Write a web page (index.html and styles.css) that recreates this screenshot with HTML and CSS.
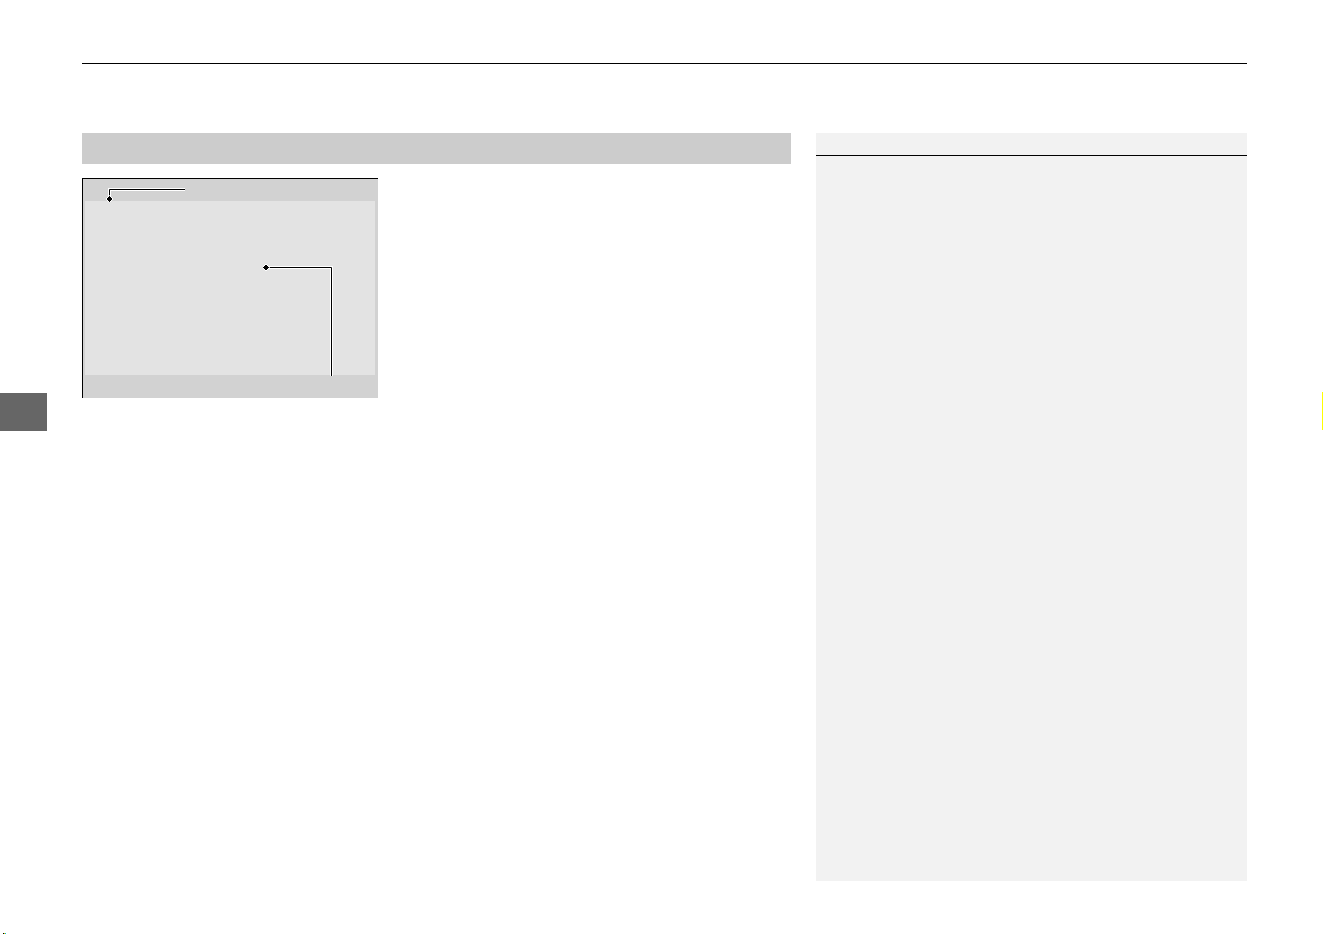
FILE: index.html
```html
<!DOCTYPE html>
<html lang="en">
<head>
<meta charset="utf-8">
<title>Manual page</title>
<link rel="stylesheet" href="styles.css">
</head>
<body>
<div class="page">
  <div class="side-left">
    <div class="tab"></div>
    <div class="corner-marks"><span class="m1"></span><span class="m2"></span><span class="m3"></span></div>
  </div>
  <div class="main">
    <div class="top-rule"></div>
    <div class="content">
      <div class="left-col">
        <div class="section-bar"></div>
        <div class="figure">
          <svg width="296" height="220" viewBox="0 0 296 220" xmlns="http://www.w3.org/2000/svg">
            <rect x="0" y="0" width="296" height="220" fill="#d2d2d2"/>
            <rect x="3" y="23" width="290" height="174" fill="#e3e3e3"/>
            <line x1="0" y1="0.5" x2="296" y2="0.5" stroke="#000" stroke-width="1"/>
            <line x1="0.5" y1="0" x2="0.5" y2="220" stroke="#000" stroke-width="1"/>
            <g fill="none" stroke="#fff" stroke-width="3">
              <polyline points="27.5,21 27.5,11.5 103,11.5"/>
              <polyline points="184,89.5 249.5,89.5 249.5,198"/>
            </g>
            <g fill="none" stroke="#000" stroke-width="1">
              <polyline points="27.5,21 27.5,11.5 103,11.5"/>
              <polyline points="184,89.5 249.5,89.5 249.5,198"/>
            </g>
            <polygon points="27.5,17.5 31,21 27.5,24.5 24,21" fill="#000" stroke="#fff" stroke-width="1"/>
            <polygon points="184,86 187.5,89.5 184,93 180.5,89.5" fill="#000" stroke="#fff" stroke-width="1"/>
          </svg>
        </div>
      </div>
      <div class="right-col">
        <div class="panel-head"></div>
      </div>
    </div>
  </div>
  <div class="side-right">
    <div class="yellow-mark"></div>
  </div>
</div>
</body>
</html>
```

FILE: styles.css
```css
html, body {
  margin: 0;
  padding: 0;
  background: #ffffff;
  font-family: "Liberation Sans", Arial, sans-serif;
}

.page {
  display: flex;
  width: 1323px;
  height: 934px;
  overflow: hidden;
}

.side-left {
  width: 82px;
  flex: none;
  display: flex;
  flex-direction: column;
}

.tab {
  width: 47px;
  height: 38px;
  margin-top: 393px;
  background: #666666;
}

.corner-marks {
  margin-top: auto;
  margin-left: 3px;
  display: flex;
  height: 1px;
}

.corner-marks span {
  width: 1px;
  height: 1px;
}

.corner-marks .m1 { background: #000000; }
.corner-marks .m2 { background: #e0c000; }
.corner-marks .m3 { background: #00c0e0; }

.main {
  width: 1165px;
  flex: none;
  display: flex;
  flex-direction: column;
}

.top-rule {
  margin-top: 63px;
  border-top: 1px solid #000000;
}

.content {
  margin-top: 69px;
  display: flex;
  gap: 25px;
}

.left-col {
  width: 709px;
  display: flex;
  flex-direction: column;
}

.section-bar {
  height: 31px;
  background: #cccccc;
}

.figure {
  margin-top: 14px;
  width: 296px;
  height: 220px;
}

.figure svg {
  display: block;
}

.right-col {
  width: 431px;
  height: 748px;
  background: #f2f2f2;
}

.panel-head {
  height: 22px;
  border-bottom: 1px solid #000000;
}

.side-right {
  flex: 1;
  display: flex;
  justify-content: flex-end;
}

.yellow-mark {
  width: 1px;
  height: 38px;
  margin-top: 392px;
  background: #ffff00;
}
```
